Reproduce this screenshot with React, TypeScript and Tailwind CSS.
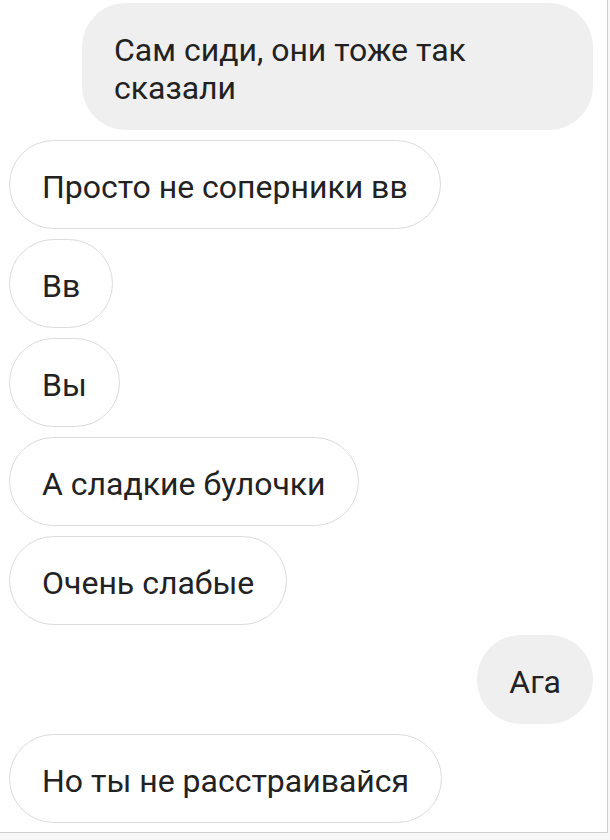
import React from "react";

type Msg = { text: string; mine?: boolean };

const messages: Msg[] = [
  { text: "Сам сиди, они тоже так сказали", mine: true },
  { text: "Просто не соперники вв" },
  { text: "Вв" },
  { text: "Вы" },
  { text: "А сладкие булочки" },
  { text: "Очень слабые" },
  { text: "Ага", mine: true },
  { text: "Но ты не расстраивайся" },
];

function Bubble({ text, mine }: Msg) {
  if (mine) {
    return (
      <div className="self-end max-w-[511px] rounded-[44px] bg-[#efefef] px-[32px] pb-[23px] pt-[28px] text-[32px] leading-[38px] text-[#222]">
        {text}
      </div>
    );
  }
  return (
    <div className="self-start rounded-full border border-[#dbdbdb] bg-white px-[32px] pb-[22px] pt-[27px] text-[32px] leading-[38px] text-[#222]">
      {text}
    </div>
  );
}

export default function App() {
  return (
    <div
      className="h-[840px] w-[610px] overflow-hidden bg-[#f7f7f7]"
      style={{ fontFamily: "Roboto, 'Noto Sans', sans-serif" }}
    >
      <div className="flex h-[833px] w-[608px] flex-col gap-[10px] border-b border-r border-[#d0d0d0] bg-white pl-[9px] pr-[14px] pt-[3px]">
        {messages.map((m, i) => (
          <Bubble key={i} {...m} />
        ))}
      </div>
    </div>
  );
}
